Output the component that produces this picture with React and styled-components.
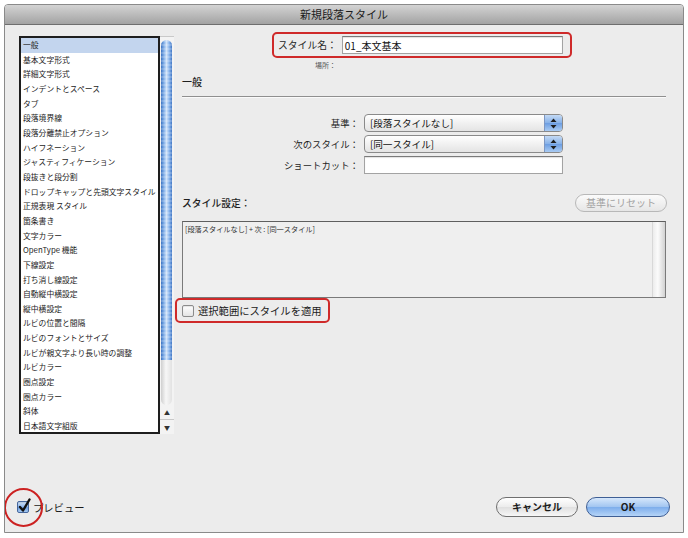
import React from 'react';
import styled, { createGlobalStyle } from 'styled-components';

const GlobalStyle = createGlobalStyle`
  html, body {
    margin: 0;
    padding: 0;
    background: #fff;
  }
  body {
    font-family: "Noto Sans CJK JP", "Liberation Sans", sans-serif;
    color: #1f1f1f;
  }
`;

const Window = styled.div`
  margin: 4px;
  width: 680px;
  height: 529px;
  box-sizing: border-box;
  border: 1px solid #8a8a8a;
  border-radius: 4px 4px 0 0;
  background: #ececec;
  display: flex;
  flex-direction: column;
  overflow: hidden;
`;

const TitleBar = styled.div`
  flex: none;
  height: 19px;
  display: flex;
  align-items: center;
  justify-content: center;
  background: linear-gradient(#d3d3d3, #a3a3a3);
  border-bottom: 1px solid #6e6e6e;
  font-size: 11px;
  line-height: 1;
  color: #1c1c1c;
`;

const Body = styled.div`
  flex: 1;
  display: flex;
  flex-direction: column;
  padding: 7px 13px 15px 14px;
  min-height: 0;
`;

const Main = styled.div`
  display: flex;
  align-items: flex-start;
`;

/* ---------- left list ---------- */

const Sidebar = styled.div`
  margin-top: 4px;
  height: 398px;
  width: 155px;
  display: flex;
  flex: none;
`;

const ListBox = styled.ul`
  list-style: none;
  margin: 0;
  padding: 0;
  width: 141px;
  box-sizing: border-box;
  border: 2px solid #1e1e1e;
  background: #fff;
  overflow: hidden;
`;

const ListItem = styled.li`
  height: 14.66px;
  line-height: 14.66px;
  padding-left: 2px;
  font-size: 7.8px;
  white-space: nowrap;
  color: #1c1c1c;
  background: ${(p) => (p.$selected ? '#c3d5ee' : 'transparent')};
`;

const ScrollColumn = styled.div`
  width: 14px;
  display: flex;
  flex-direction: column;
  padding-top: 3px;
  box-sizing: border-box;
  border-top: 1px solid #c9c9c9;
  background: #f3f3f3;
`;

const Thumb = styled.div`
  margin-left: 1px;
  width: 11px;
  height: 320px;
  border-radius: 6px 6px 0 0;
  background:
    repeating-linear-gradient(to bottom, rgba(255, 255, 255, 0.18) 0 2px, transparent 2px 4px),
    linear-gradient(to right, #3a72c2, #86b2ea 28%, #cfe2f9 50%, #8ab5ec 74%, #4178c6);
`;

const TrackRest = styled.div`
  flex: 1;
  margin-left: 1px;
  width: 11px;
  border-radius: 0 0 6px 6px;
  background: linear-gradient(to right, #cfcfcf, #f7f7f7 45%, #e2e2e2);
`;

const ArrowButton = styled.div`
  height: 14px;
  display: flex;
  align-items: center;
  justify-content: center;
  font-size: 6px;
  color: #333;
  border-top: ${(p) => (p.$divider ? '1px solid #c8c8c8' : 'none')};
`;

/* ---------- right panel ---------- */

const Panel = styled.div`
  margin-left: 7px;
  width: 486px;
  display: flex;
  flex-direction: column;
`;

const NameBox = styled.div`
  margin-left: 91px;
  width: 300px;
  height: 26px;
  box-sizing: border-box;
  border: 2px solid #cf2a2a;
  border-radius: 5px;
  display: flex;
  align-items: center;
  padding: 0 7px 0 4px;
  gap: 5px;
`;

const NameLabel = styled.span`
  font-size: 9.8px;
  white-space: nowrap;
`;

const TextField = styled.div`
  height: 18px;
  flex: ${(p) => (p.$grow ? 1 : 'none')};
  box-sizing: border-box;
  border: 1px solid #a3a3a3;
  border-top-color: #7a7a7a;
  background: #fff;
  box-shadow: inset 0 1px 1px rgba(0, 0, 0, 0.12);
  display: flex;
  align-items: center;
  padding-left: 2px;
  font-size: 10px;
  color: #111;
`;

const Location = styled.div`
  margin: 3px 0 0 134px;
  font-size: 7px;
  line-height: 8px;
  color: #555;
`;

const SectionTitle = styled.div`
  margin-top: 6px;
  padding-left: 1px;
  font-size: 10px;
  line-height: 14px;
  font-weight: 500;
`;

const Divider = styled.div`
  margin: 7px 1px 0;
  border-top: 1px solid #8f8f8f;
  border-bottom: 1px solid #fafafa;
`;

const FormGrid = styled.div`
  margin-top: 16px;
  display: grid;
  grid-template-columns: 178px 199px;
  column-gap: 5px;
  row-gap: 3px;
  align-items: center;
`;

const FieldLabel = styled.span`
  text-align: right;
  font-size: 9.4px;
  white-space: nowrap;
`;

const Popup = styled.div`
  height: 18px;
  box-sizing: border-box;
  border: 1px solid #8a8a8a;
  border-radius: 4px;
  background: linear-gradient(#ffffff, #f1f1f1 50%, #e4e4e4);
  display: flex;
  overflow: hidden;
`;

const PopupText = styled.span`
  flex: 1;
  padding-left: 5px;
  font-size: 9.6px;
  line-height: 16px;
  color: #111;
`;

const Stepper = styled.span`
  width: 17px;
  border-left: 1px solid #7d97c2;
  background: linear-gradient(#c4daf5, #85b0e8 50%, #6d9ee2 52%, #a9cbf3);
  display: flex;
  align-items: center;
  justify-content: center;
`;

const StyleHeader = styled.div`
  margin-top: 20px;
  height: 18px;
  display: flex;
  align-items: center;
  justify-content: space-between;
`;

const StyleLabel = styled.span`
  padding-left: 1px;
  font-size: 9.8px;
  font-weight: 500;
`;

const PillButton = styled.button`
  width: ${(p) => p.$width}px;
  height: ${(p) => p.$height}px;
  box-sizing: border-box;
  padding: 0;
  border-radius: 10px;
  font-family: inherit;
  font-size: 10px;
  line-height: 1;
  font-weight: ${(p) => (p.$bold ? 700 : 400)};
  color: ${(p) => (p.$disabled ? '#a2a2a2' : '#1a1a1a')};
  border: 1px solid ${(p) => (p.$primary ? '#3f5f95' : p.$disabled ? '#b8b8b8' : '#6f6f6f')};
  background: ${(p) =>
    p.$primary
      ? 'linear-gradient(#d6e7fb, #a3c6f1 48%, #7eaeec 52%, #b5d4f7)'
      : p.$disabled
      ? 'linear-gradient(#fbfbfb, #e6e6e6)'
      : 'linear-gradient(#ffffff, #ededed 48%, #e0e0e0 52%, #f7f7f7)'};
`;

const Summary = styled.div`
  margin: 9px 1px 0;
  height: 77px;
  box-sizing: border-box;
  border: 1px solid #7a7a7a;
  border-top-color: #5f5f5f;
  background: #efefef;
  display: flex;
`;

const SummaryText = styled.div`
  flex: 1;
  padding: 3px 2px;
  font-size: 7.2px;
  line-height: 9px;
  color: #333;
`;

const SummaryScroll = styled.div`
  width: 12px;
  background: linear-gradient(to right, #ececec, #fbfbfb 40%, #d2d2d2);
  border-left: 1px solid #d8d8d8;
`;

const ApplyBox = styled.div`
  margin-left: -6px;
  width: 155px;
  height: 25px;
  box-sizing: border-box;
  border: 2px solid #cf2a2a;
  border-radius: 5px;
  display: flex;
  align-items: center;
  padding-left: 5px;
  gap: 4px;
`;

const CheckLabel = styled.span`
  font-size: 10.3px;
  white-space: nowrap;
  color: #1a1a1a;
`;

const Checkbox = styled.span`
  position: relative;
  flex: none;
  width: 12px;
  height: 12px;
  box-sizing: border-box;
  border-radius: 2px;
  border: 1px solid ${(p) => (p.$checked ? '#46679c' : '#8c8c8c')};
  background: ${(p) =>
    p.$checked
      ? 'linear-gradient(#d0e2f8, #8cb6ec 50%, #6c9fe3 52%, #a5c9f2)'
      : 'linear-gradient(#ffffff, #e4e4e4)'};
  box-shadow: inset 0 1px 1px rgba(0, 0, 0, 0.1);
`;

const CheckMark = styled.svg`
  position: absolute;
  left: 0;
  top: -3px;
  overflow: visible;
`;

const RedCircle = styled.span`
  position: absolute;
  left: -14px;
  top: -14px;
  width: 39px;
  height: 39px;
  box-sizing: border-box;
  border: 2px solid #cc2222;
  border-radius: 50%;
`;

/* ---------- footer ---------- */

const Footer = styled.div`
  margin-top: auto;
  height: 20px;
  display: flex;
  align-items: center;
  justify-content: space-between;
`;

const PreviewCheck = styled.div`
  margin-left: -2px;
  display: flex;
  align-items: center;
  gap: 4px;
`;

const ButtonRow = styled.div`
  display: flex;
  gap: 8px;
`;

const items = [
  '一般',
  '基本文字形式',
  '詳細文字形式',
  'インデントとスペース',
  'タブ',
  '段落境界線',
  '段落分離禁止オプション',
  'ハイフネーション',
  'ジャスティフィケーション',
  '段抜きと段分割',
  'ドロップキャップと先頭文字スタイル',
  '正規表現 スタイル',
  '箇条書き',
  '文字カラー',
  'OpenType 機能',
  '下線設定',
  '打ち消し線設定',
  '自動縦中横設定',
  '縦中横設定',
  'ルビの位置と間隔',
  'ルビのフォントとサイズ',
  'ルビが親文字より長い時の調整',
  'ルビカラー',
  '圏点設定',
  '圏点カラー',
  '斜体',
  '日本語文字組版',
];

function StepperIcon() {
  return (
    <svg width="7" height="11" viewBox="0 0 7 11">
      <path d="M3.5 0.5 L6.5 4 L0.5 4 Z" fill="#1d1d1d" />
      <path d="M3.5 10.5 L6.5 7 L0.5 7 Z" fill="#1d1d1d" />
    </svg>
  );
}

function PopupField({ value }) {
  return (
    <Popup>
      <PopupText>{value}</PopupText>
      <Stepper>
        <StepperIcon />
      </Stepper>
    </Popup>
  );
}

export default function App() {
  return (
    <>
      <GlobalStyle />
      <Window>
        <TitleBar>新規段落スタイル</TitleBar>
        <Body>
          <Main>
            <Sidebar>
              <ListBox>
                {items.map((item, i) => (
                  <ListItem key={item} $selected={i === 0}>
                    {item}
                  </ListItem>
                ))}
              </ListBox>
              <ScrollColumn>
                <Thumb />
                <TrackRest />
                <ArrowButton>▲</ArrowButton>
                <ArrowButton $divider>▼</ArrowButton>
              </ScrollColumn>
            </Sidebar>

            <Panel>
              <NameBox>
                <NameLabel>スタイル名：</NameLabel>
                <TextField $grow>01_本文基本</TextField>
              </NameBox>
              <Location>場所：</Location>
              <SectionTitle>一般</SectionTitle>
              <Divider />

              <FormGrid>
                <FieldLabel>基準：</FieldLabel>
                <PopupField value="[段落スタイルなし]" />
                <FieldLabel>次のスタイル：</FieldLabel>
                <PopupField value="[同一スタイル]" />
                <FieldLabel>ショートカット：</FieldLabel>
                <TextField />
              </FormGrid>

              <StyleHeader>
                <StyleLabel>スタイル設定：</StyleLabel>
                <PillButton type="button" $width={92} $height={18} $disabled>
                  基準にリセット
                </PillButton>
              </StyleHeader>

              <Summary>
                <SummaryText>[段落スタイルなし] + 次 : [同一スタイル]</SummaryText>
                <SummaryScroll />
              </Summary>

              <ApplyBox>
                <Checkbox />
                <CheckLabel>選択範囲にスタイルを適用</CheckLabel>
              </ApplyBox>
            </Panel>
          </Main>

          <Footer>
            <PreviewCheck>
              <Checkbox $checked>
                <CheckMark width="12" height="14" viewBox="0 0 12 14">
                  <path
                    d="M2 8 L5 11.5 L11.5 0.5"
                    fill="none"
                    stroke="#111"
                    strokeWidth="2.4"
                    strokeLinecap="round"
                    strokeLinejoin="round"
                  />
                </CheckMark>
                <RedCircle />
              </Checkbox>
              <CheckLabel>プレビュー</CheckLabel>
            </PreviewCheck>
            <ButtonRow>
              <PillButton type="button" $width={82} $height={20} $bold>
                キャンセル
              </PillButton>
              <PillButton type="button" $width={84} $height={20} $bold $primary>
                OK
              </PillButton>
            </ButtonRow>
          </Footer>
        </Body>
      </Window>
    </>
  );
}
